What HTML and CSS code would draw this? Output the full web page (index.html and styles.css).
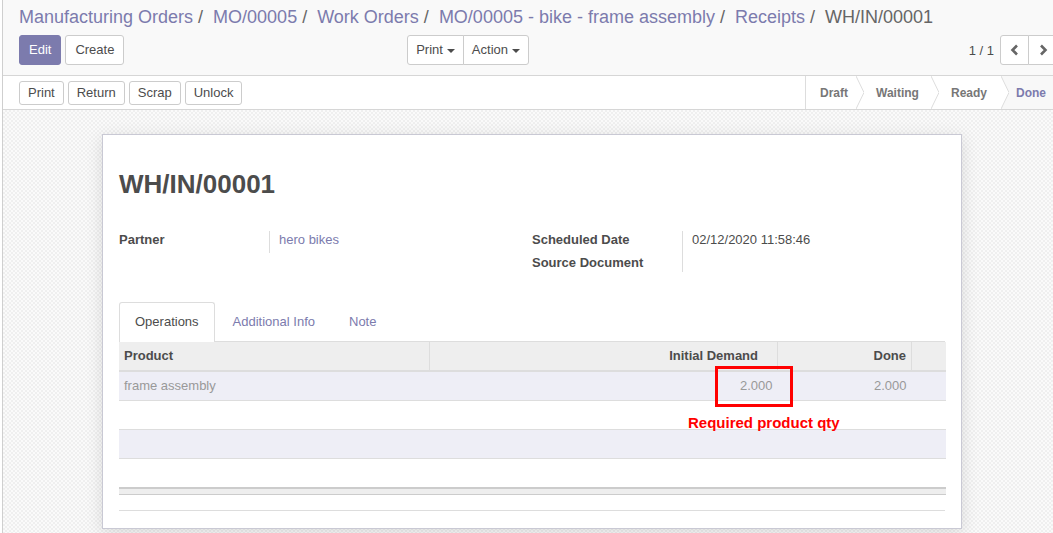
FILE: index.html
```html
<!DOCTYPE html>
<html>
<head>
<meta charset="utf-8">
<link rel="stylesheet" href="styles.css">
</head>
<body>
<div class="app">
  <div class="cp">
    <ol class="crumbs">
      <li><a>Manufacturing Orders</a><span class="sep">/</span></li>
      <li><a>MO/00005</a><span class="sep">/</span></li>
      <li><a>Work Orders</a><span class="sep">/</span></li>
      <li><a>MO/00005 - bike - frame assembly</a><span class="sep">/</span></li>
      <li><a>Receipts</a><span class="sep">/</span></li>
      <li class="active">WH/IN/00001</li>
    </ol>
    <div class="cp-row">
      <div class="cp-left">
        <div class="btns">
          <button class="btn primary">Edit</button>
          <button class="btn">Create</button>
        </div>
        <div class="btn-group">
          <button class="btn gb">Print <span class="caret"></span></button>
          <button class="btn gb">Action <span class="caret"></span></button>
        </div>
      </div>
      <div class="cp-right">
        <span class="pager-val">1 / 1</span>
        <div class="btn-group">
          <button class="btn pg"><svg width="10" height="12" viewBox="0 0 10 12"><polyline points="7,1.5 2.5,6 7,10.5" fill="none" stroke="#666" stroke-width="2.6"/></svg></button>
          <button class="btn pg"><svg width="10" height="12" viewBox="0 0 10 12"><polyline points="3,1.5 7.5,6 3,10.5" fill="none" stroke="#666" stroke-width="2.6"/></svg></button>
        </div>
      </div>
    </div>
  </div>

  <div class="statusrow">
    <div class="sbtns">
      <button class="btn sm">Print</button>
      <button class="btn sm">Return</button>
      <button class="btn sm">Scrap</button>
      <button class="btn sm">Unlock</button>
    </div>
    <div class="statusbar">
      <span class="st st-draft">Draft</span>
      <svg class="chev" width="8" height="33" viewBox="0 0 8 33"><polygon points="0,0 8,16.5 0,33" fill="#fff"/><polyline points="0,0 8,16.5 0,33" fill="none" stroke="#ddd" stroke-width="1"/></svg>
      <span class="st st-waiting">Waiting</span>
      <svg class="chev" width="8" height="33" viewBox="0 0 8 33"><polygon points="0,0 8,16.5 0,33" fill="#fff"/><polyline points="0,0 8,16.5 0,33" fill="none" stroke="#ddd" stroke-width="1"/></svg>
      <span class="st st-ready">Ready</span>
      <svg class="chev chev-cur" width="8" height="33" viewBox="0 0 8 33"><polygon points="0,0 8,16.5 0,33" fill="#fff"/><polyline points="0,0 8,16.5 0,33" fill="none" stroke="#ddd" stroke-width="1"/></svg>
      <span class="st st-done current">Done</span>
    </div>
  </div>

  <div class="sheet-bg">
    <div class="sheet">
      <h1 class="title">WH/IN/00001</h1>
      <div class="groups">
        <table class="grp">
          <tr><td class="lbl">Partner</td><td class="val val-tall"><a>hero bikes</a></td></tr>
        </table>
        <table class="grp">
          <tr><td class="lbl">Scheduled Date</td><td class="val val-date">02/12/2020 11:58:46</td></tr>
          <tr><td class="lbl">Source Document</td><td class="val"></td></tr>
        </table>
      </div>

      <ul class="tabs">
        <li class="tab active">Operations</li>
        <li class="tab">Additional Info</li>
        <li class="tab">Note</li>
      </ul>

      <table class="lines">
        <thead>
          <tr>
            <th class="c-prod">Product</th>
            <th class="c-dem num">Initial Demand</th>
            <th class="c-done num">Done</th>
            <th class="c-x"></th>
          </tr>
        </thead>
        <tbody>
          <tr class="odd"><td>frame assembly</td><td class="num">2.000</td><td class="num">2.000</td><td></td></tr>
          <tr><td></td><td></td><td></td><td></td></tr>
          <tr class="odd"><td></td><td></td><td></td><td></td></tr>
          <tr><td></td><td></td><td></td><td></td></tr>
        </tbody>
        <tfoot>
          <tr><td></td><td></td><td></td><td></td></tr>
        </tfoot>
      </table>
      <div class="list-bottom"></div>

      <div class="annot-box"></div>
      <div class="annot-text">Required product qty</div>
    </div>
  </div>
</div>
</body>
</html>
```

FILE: styles.css
```css
html, body {
  margin: 0;
  padding: 0;
  overflow: hidden;
  background: #fff;
}
body {
  font-family: "Liberation Sans", Arial, sans-serif;
  font-size: 13px;
  color: #4c4c4c;
}
.app {
  margin-left: 2px;
  border-left: 1px solid #cfcfcf;
  width: 1070px;
  height: 533px;
  display: flex;
  flex-direction: column;
}

/* control panel */
.cp {
  background: #f9f9f9;
  border-bottom: 1px solid #d6d6d6;
  padding: 5px 16px 10px;
}
.crumbs {
  list-style: none;
  margin: 0;
  padding: 0;
  display: flex;
  font-size: 18px;
  line-height: 24px;
  white-space: nowrap;
}
.crumbs a { color: #7c7bad; }
.crumbs .sep { color: #666; margin: 0 10px 0 5px; }
.crumbs .active { color: #666; }

.cp-row {
  display: grid;
  grid-template-columns: 510px 1fr;
  margin-top: 6px;
}
.cp-left {
  display: flex;
  justify-content: space-between;
}
.btns { display: flex; gap: 4px; }
.cp-right {
  display: flex;
  justify-content: flex-end;
  align-items: center;
  gap: 6px;
}
.pager-val { color: #4c4c4c; font-size: 13px; }

.btn {
  font-family: inherit;
  font-size: 13px;
  line-height: 18px;
  padding: 5px 9px;
  border: 1px solid #ccc;
  background: #fff;
  color: #4c4c4c;
  border-radius: 3px;
  margin: 0;
  display: inline-flex;
  align-items: center;
}
.btn.primary {
  background: #7c7bad;
  border-color: #7c7bad;
  color: #fff;
}
.btn.gb { padding: 5px 8px; }
.btn-group { display: flex; }
.btn-group .btn { border-radius: 0; }
.btn-group .btn:first-child { border-radius: 3px 0 0 3px; }
.btn-group .btn:last-child { border-radius: 0 3px 3px 0; margin-left: -1px; }
.btn .caret {
  display: inline-block;
  width: 0;
  height: 0;
  border-left: 4px solid transparent;
  border-right: 4px solid transparent;
  border-top: 4px solid #4c4c4c;
  margin-left: 4px;
  margin-top: 1px;
}
.btn.pg {
  width: 29px;
  height: 30px;
  justify-content: center;
  padding: 0;
}

/* status row */
.statusrow {
  display: flex;
  align-items: center;
  height: 33px;
  border-bottom: 1px solid #d6d6d6;
  padding-left: 16px;
  padding-right: 14px;
  background: #fff;
}
.sbtns { display: flex; gap: 4px; }
.btn.sm { padding: 2px 8px; }
.statusbar {
  margin-left: auto;
  display: flex;
  align-self: stretch;
  border-left: 1px solid #ddd;
}
.st {
  display: flex;
  align-items: center;
  font-weight: bold;
  font-size: 12px;
  color: #777;
  box-sizing: border-box;
}
.st-draft { width: 50px; padding-left: 14px; }
.st-waiting { width: 67px; padding-left: 12px; }
.st-ready { width: 62px; padding-left: 12px; }
.st-done { width: 50px; padding-left: 7px; }
.st.current { color: #7c7bad; background: #f8f8f8; }
.chev { display: block; }
.chev-cur { background: #f8f8f8; }

/* sheet */
.sheet-bg {
  flex: 1;
  background-color: #f6f6f6;
  background-image: repeating-conic-gradient(#efefef 0 25%, #fafafa 0 50%);
  background-size: 4px 4px;
  padding: 24px 0 0 99px;
}
.sheet {
  position: relative;
  width: 826px;
  background: #fff;
  border: 1px solid #c9c9d4;
  box-shadow: 0 4px 16px rgba(0, 0, 0, 0.12);
  padding: 32px 16px 17px;
}
.title {
  margin: 0;
  font-size: 26px;
  line-height: 34px;
  font-weight: bold;
  color: #4c4c4c;
}
.groups {
  display: grid;
  grid-template-columns: 1fr 1fr;
  align-items: start;
  margin-top: 30px;
}
.grp {
  border-collapse: collapse;
}
.grp td {
  padding: 0;
  line-height: 18px;
  vertical-align: top;
}
.grp .lbl {
  width: 150px;
  font-weight: bold;
  color: #4c4c4c;
  border-right: 1px solid #ddd;
  white-space: nowrap;
}
.grp .val { padding-left: 9px; }
.grp .val a { color: #7c7bad; }
.grp .val-tall { height: 22px; }
.grp .val-date { height: 23px; }

.tabs {
  list-style: none;
  margin: 30px 0 0;
  padding: 0;
  display: flex;
  border-bottom: 1px solid #ddd;
}
.tab {
  padding: 10px 15px;
  line-height: 18px;
  color: #7c7bad;
  border: 1px solid transparent;
  border-bottom: none;
  margin-bottom: -1px;
  margin-right: 2px;
  border-radius: 3px 3px 0 0;
}
.tab.active {
  color: #4c4c4c;
  border-color: #ddd;
  background: #fff;
  padding-bottom: 11px;
}

.lines {
  width: 100%;
  border-collapse: collapse;
  table-layout: fixed;
}
.lines th {
  background: #eee;
  font-weight: bold;
  text-align: left;
  padding: 5px 5px;
  line-height: 18px;
  border-bottom: 2px solid #ddd;
  border-right: 1px solid #ddd;
  color: #4c4c4c;
}
.lines th:last-child { border-right: none; }
.lines th.c-dem { padding-right: 19px; }
.c-prod { width: 300px; }
.c-dem { width: 323px; }
.c-done { width: 123px; }
.c-x { width: 24px; }
.lines .num { text-align: right; }
.lines td {
  height: 18px;
  line-height: 18px;
  padding: 5px 5px;
  border-bottom: 1px solid #ddd;
  color: #999;
}
.lines tbody tr.odd td { background: #eeeef6; }
.lines tfoot td {
  height: 5px;
  padding: 0;
  line-height: 0;
  background: #eee;
  border-top: 2px solid #ccc;
  border-bottom: 1px solid #ccc;
}
.list-bottom {
  height: 15px;
  border-bottom: 1px solid #ddd;
}

.annot-box {
  position: absolute;
  left: 612px;
  top: 231px;
  width: 72px;
  height: 35px;
  border: 3px solid #f00;
}
.annot-text {
  position: absolute;
  left: 585px;
  top: 279px;
  font-family: "Liberation Sans", Arial, sans-serif;
  font-weight: bold;
  font-size: 15px;
  line-height: 18px;
  color: #f00;
  white-space: nowrap;
}
```
